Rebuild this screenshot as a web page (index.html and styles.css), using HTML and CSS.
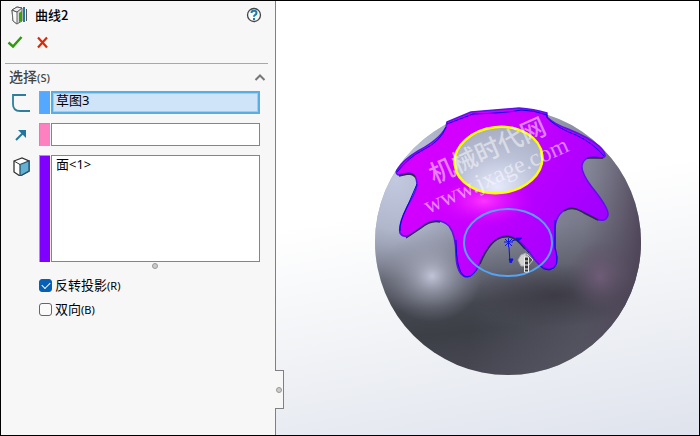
FILE: index.html
```html
<!DOCTYPE html>
<html lang="zh-CN">

<head>
    <meta charset="UTF-8">
    <meta name="viewport" content="width=device-width, initial-scale=1.0">
    <title>曲线2</title>
    <link rel="stylesheet" href="styles.css">
</head>

<body>
    <form class="panel">
        <header class="title-bar">
            <svg class="feature-icon" width="18" height="20" viewBox="0 0 18 20">
                <path d="M2 5 7 2l5 1v13l-5 3-4-3z" fill="#d6d6d6" stroke="#666" />
                <path d="M2 5l5 2v12l-4-3z" fill="#f8f8f8" stroke="#666" />
                <path d="M2 5l5-3 5 1-5 4z" fill="#eee" stroke="#555" />
                <path d="M9 8l3-2v10l-3 1z" fill="#35a800" />
                <path d="M13 2h2v15h-2z" fill="#23789f" />
                <path d="M16.500 4v12" stroke="#555" />
            </svg>
            <h1>曲线2</h1>
            <button type="button" class="icon-button help" aria-label="帮助">
                <svg width="16" height="16" viewBox="0 0 16 16">
                    <circle cx="8" cy="8" r="6.5" fill="#fafafa" stroke="#444" stroke-width="1.3" />
                    <path d="M5.5 6Q5.5 3.8 8 3.8T10.5 6Q10.5 7.3 9 8 8 8.6 8 9.8M8 11v2" fill="none" stroke="#207ba8" stroke-width="2" />
                </svg>
            </button>
        </header>

        <div class="actions">
            <button type="button" class="icon-button" aria-label="确定">
                <svg width="16" height="16" viewBox="0 0 16 16">
                    <path d="M1.5 8.5 6 12.5 14.5 3" fill="none" stroke="#2e9a0c" stroke-width="2.5" />
                </svg>
            </button>
            <button type="button" class="icon-button" aria-label="取消">
                <svg width="16" height="16" viewBox="0 0 16 16">
                    <path d="M3 3.5l9 10M12 3.5l-9 10" fill="none" stroke="#d82a08" stroke-width="2.2" />
                </svg>
            </button>
        </div>

        <section class="group">
            <div class="group-head">
                <h2>选择<small>(S)</small></h2>
                <button type="button" class="icon-button" aria-label="折叠">
                    <svg width="16" height="16" viewBox="0 0 16 16">
                        <path d="M3.5 11 8 6.5 12.5 11" fill="none" stroke="#777" stroke-width="2" />
                    </svg>
                </button>
            </div>

            <div class="field">
                <label for="sketch" aria-label="草图">
                    <svg width="20" height="20" viewBox="0 0 20 20">
                        <path d="M15 3H2v9q0 7 7 7h10" fill="none" stroke="#2d7e9c" stroke-width="1.8" />
                    </svg>
                </label>
                <span class="swatch blue"></span>
                <input type="text" id="sketch" class="active" value="草图3">
            </div>

            <div class="field">
                <label for="direction" aria-label="方向">
                    <svg width="20" height="20" viewBox="0 0 20 20">
                        <path d="M5 16 13 8" stroke="#22789c" stroke-width="2" />
                        <path d="M7 6h8v8z" fill="#22789c" />
                    </svg>
                </label>
                <span class="swatch pink"></span>
                <input type="text" id="direction">
            </div>

            <div class="field">
                <label for="faces" aria-label="面">
                    <svg width="20" height="20" viewBox="0 0 20 20">
                        <path d="M3 5 11 2l7 3v10l-9 5-6-4z" fill="#fff" stroke="#333" stroke-width="1.3" />
                        <path d="M9 8.5 18 5v10l-9 5z" fill="#62b0d2" stroke="#24546b" stroke-width="1.3" />
                        <path d="M3 5l6 3.500" stroke="#333" />
                    </svg>
                </label>
                <span class="swatch violet"></span>
                <textarea id="faces">面&lt;1&gt;</textarea>
            </div>

            <div class="resize-row"><span class="grip"></span></div>

            <div class="option">
                <input type="checkbox" id="reverse" checked>
                <label for="reverse">反转投影<small>(R)</small></label>
            </div>
            <div class="option">
                <input type="checkbox" id="both">
                <label for="both">双向<small>(B)</small></label>
            </div>
        </section>
        <div class="splitter"><span class="grip"></span></div>
    </form>

    <main class="viewport">
        <svg class="scene" viewBox="276 1 423 434">
            <defs>
                <linearGradient id="base" x1=".42" y1="0" x2=".52" y2="1">
                    <stop offset="0" stop-color="#b0b5c8" />
                    <stop offset=".3" stop-color="#a2a7ba" />
                    <stop offset=".46" stop-color="#8d91a3" />
                    <stop offset=".58" stop-color="#6c6f7c" />
                    <stop offset=".72" stop-color="#44464f" />
                    <stop offset=".82" stop-color="#3d3f47" />
                    <stop offset="1" stop-color="#484853" />
                </linearGradient>
                <linearGradient id="side" x1="0" y1=".4" x2="1" y2=".5">
                    <stop offset=".4" stop-color="#606373" stop-opacity="0" />
                    <stop offset=".78" stop-color="#61606f" stop-opacity=".5" />
                    <stop offset="1" stop-color="#504559" stop-opacity="1" />
                </linearGradient>
                <radialGradient id="glow">
                    <stop offset="0" stop-color="#c0c4d7" />
                    <stop offset=".3" stop-color="#b0b4c6" stop-opacity=".65" />
                    <stop offset="1" stop-color="#8c90a0" stop-opacity="0" />
                </radialGradient>
                <radialGradient id="leftLight">
                    <stop offset="0" stop-color="#c2c9df" />
                    <stop offset=".5" stop-color="#b7bed3" stop-opacity=".8" />
                    <stop offset="1" stop-color="#9da2b5" stop-opacity="0" />
                </radialGradient>
                <radialGradient id="plum">
                    <stop offset="0" stop-color="#6f5c77" />
                    <stop offset="1" stop-color="#5c4f65" stop-opacity="0" />
                </radialGradient>
                <radialGradient id="shade">
                    <stop offset="0" stop-color="#34323c" stop-opacity=".7" />
                    <stop offset="1" stop-color="#34323c" stop-opacity="0" />
                </radialGradient>
                <linearGradient id="purple" x1="0" y1=".1" x2="1" y2=".6">
                    <stop offset="0" stop-color="#dc00ff" />
                    <stop offset=".4" stop-color="#cc00ff" />
                    <stop offset="1" stop-color="#a000ff" />
                </linearGradient>
                <radialGradient id="hot">
                    <stop offset="0" stop-color="#ff35ff" />
                    <stop offset="1" stop-color="#e000ff" stop-opacity="0" />
                </radialGradient>
                <radialGradient id="top" cx=".45" cy=".9" r=".9">
                    <stop offset="0" stop-color="#e6eafc" />
                    <stop offset=".5" stop-color="#bcc2d8" />
                    <stop offset="1" stop-color="#a8adc2" />
                </radialGradient>
                <clipPath id="ball"><circle cx="508" cy="242" r="133" /></clipPath>
            </defs>

            <!-- sphere -->
            <g clip-path="url(#ball)">
                <path d="M375 109h266v266H375z" fill="url(#base)" />
                <ellipse cx="396" cy="180" rx="90" ry="100" fill="url(#leftLight)" />
                <path d="M375 109h266v266H375z" fill="url(#side)" />
                <ellipse cx="555" cy="295" rx="85" ry="32" fill="url(#shade)" />
                <ellipse cx="432" cy="276" rx="50" ry="46" fill="url(#glow)" />
                <ellipse cx="600" cy="276" rx="32" ry="36" fill="url(#plum)" />
            </g>

            <!-- projected face -->
            <path fill="url(#purple)" stroke="#5b12e8" stroke-width="1.500" stroke-linejoin="round" d="M447 122L471 112Q496 110 519 108Q534 109 547 113V117Q554 124 568 129Q588 137 599 146Q606 153 605 156Q604 159 595 157Q584 156 582 165Q581 174 595 191Q609 209 608 215Q606 223 596 219Q578 208 570 208Q557 211 555 227V248Q561 268 549 269Q541 270 530 253Q517 236 507 236Q493 236 481 260Q475 277 466 277Q457 275 456 256Q456 235 449 226Q438 216 424 225L410 235Q403 238 400 233Q398 225 407 207Q417 190 417 184Q416 172 408 173L398 175Q395 173 397 170Q403 160 418 151Q440 139 446 127Z" />
            <ellipse cx="484" cy="201" rx="50" ry="26" fill="url(#hot)" />
            <path fill="none" stroke="#292d42" stroke-width="1.5" d="M399 176l9-2q5 0 7 3M406 238l15-10q10-8 19-6M480 264q11-27 25-27 9-2 20 12M564 211q9-6 20 2l14 7M587 158h16" />
            <path fill="none" stroke="#0805e8" stroke-width="1" d="M447 124l26-10q35-1 48-4 12 0 26 5v3q12 11 29 17 17 8 28 21M397 172q12-15 26-22 18-9 23-23M456 240q0 30 8 36 7 3 13-7M555 220v28q6 20-6 22-6 0-10-5M417 184l-10 23q-8 16-7 24" />
            <ellipse cx="498.500" cy="160" rx="44" ry="33" fill="url(#top)" stroke="#ffff00" stroke-width="2.500" transform="rotate(-6 498.500 160)" />
            <ellipse cx="508" cy="242.500" rx="44" ry="33.500" fill="none" stroke="#55a3f8" stroke-width="2" />

            <!-- origin triad -->
            <g stroke="#1010e8" fill="none">
                <path d="M504 242h9M508.500 238v9M505 239l7 7M512 239l-7 7" />
                <path d="M509 247l1 16M512 241l9-3" />
                <path d="M509 259h4l-2 4zM516 238h6l-4 3z" fill="#1010e8" />
                <path d="M517 240l12 13" stroke="#20206a" />
            </g>

            <!-- pointer marker -->
            <path d="M518 260l3-5 5-2v13h-5z" fill="#d2d2d0" stroke="#aaa" />
            <path d="M527 254l6 6-5 6z" fill="#5c5c60" stroke="#c9c9c6" />
            <path d="M524.500 257h4v15h-4zM524.500 261h4M524.500 265h4M524.500 269h4" fill="#333" stroke="#eee" />

            <g class="watermark">
                <text class="mark-cn" transform="translate(434 184) rotate(-24)">机械时代网</text>
                <text class="mark-url" transform="translate(428 214) rotate(-24)">www.jxage.com</text>
            </g>
        </svg>
    </main>
</body>

</html>
```
FILE: styles.css
```css
* {
    box-sizing: border-box;
}

body {
    display: flex;
    min-height: 100vh;
    margin: 0;
    border: 1px solid #000;
    font-family: "Noto Sans", "Noto Sans CJK SC", sans-serif;
    font-size: 13px;
    line-height: 16px;
    color: #000;
}

h1,
h2 {
    margin: 0;
    font-weight: 500;
}

h1 {
    font-family: "Noto Sans CJK SC", sans-serif;
    font-size: 13px;
}

h2 {
    font-size: 14px;
    color: #444;
}

small {
    font-size: 11px;
}

.panel {
    position: relative;
    flex: 0 0 275px;
    padding: 4px 7px 0 4px;
    background: #f7f7f7;
    border-right: 1px solid #808080;
}

.icon-button {
    display: block;
    padding: 0;
    border: 0;
    background: none;
}

.icon-button svg,
.field svg {
    display: block;
}

.title-bar {
    display: flex;
    align-items: center;
    gap: 7px;
    height: 20px;
    padding: 0 6px 0 5px;
}

.help {
    margin-left: auto;
}

.actions {
    display: flex;
    gap: 12px;
    padding: 9px 2px 13px;
}

.group {
    border-top: 1px solid #a8a8a8;
    padding: 3px 0;
}

.group-head {
    display: flex;
    align-items: center;
    justify-content: space-between;
    height: 20px;
    margin-bottom: 4px;
    padding-left: 4px;
}

.field {
    display: flex;
    align-items: stretch;
    margin: 0 8px 9px 6px;
}

.field label {
    width: 28px;
    padding-top: 1px;
}

.swatch {
    width: 11px;
    margin-right: 1px;
    border: 1px solid #a0a0a0;
    border-width: 1px 0 0 1px;
}

.blue {
    background: #55a8ff;
}

.pink {
    background: #ff80c0;
}

.violet {
    background: #8000ff;
}

.field input,
.field textarea {
    flex: 1;
    min-width: 0;
    height: 23px;
    padding: 0 4px 4px;
    border: 1px solid #7f849c;
    border-radius: 0;
    background: #fff;
    font: inherit;
    outline: 0;
    resize: none;
}

.field textarea {
    height: 107px;
}

.field input.active {
    padding: 0 3px 6px;
    border: 2px solid #58aee2;
    background: #cfe4f8;
    box-shadow: inset 0 0 0 1px #9fcdf0;
}

.grip {
    width: 6px;
    height: 6px;
    border: 1px solid #999;
    border-radius: 50%;
    background: #ccc;
}

.resize-row {
    display: flex;
    justify-content: center;
    margin: -8px 0 4px 36px;
}

.option {
    display: flex;
    align-items: center;
    gap: 3px;
    height: 24px;
    padding-left: 34px;
}

.option input {
    appearance: none;
    width: 13px;
    height: 13px;
    margin: 0;
    border: 1px solid #666;
    border-radius: 3px;
    background: #fafafa;
}

.option input:checked {
    border-color: #0560b6;
    background: #0560b6;
}

.option input:checked::after {
    content: "";
    display: block;
    width: 7px;
    height: 4px;
    margin: 2px;
    border: solid #fff;
    border-width: 0 0 1px 1px;
    transform: rotate(-45deg);
}

/* tab that hangs over the edge of the model view */
.splitter {
    position: absolute;
    z-index: 1;
    right: -9px;
    bottom: 26px;
    display: flex;
    align-items: center;
    justify-content: center;
    width: 9px;
    height: 39px;
    border: 1px solid #808080;
    border-left: 0;
    background: #f7f7f7;
}

.viewport {
    flex: 1;
    min-width: 0;
    display: flex;
    background: linear-gradient(170deg, #fff 45%, #f1f3f6 70%, #dfe3ed);
}

.scene {
    width: 100%;
}

.watermark {
    fill: #fff;
    fill-opacity: 0.5;
}

.mark-cn {
    font-family: "Noto Sans CJK SC", sans-serif;
    font-size: 25px;
    font-weight: 500;
}

.mark-url {
    font-family: "Liberation Serif", serif;
    font-size: 24px;
}
```
